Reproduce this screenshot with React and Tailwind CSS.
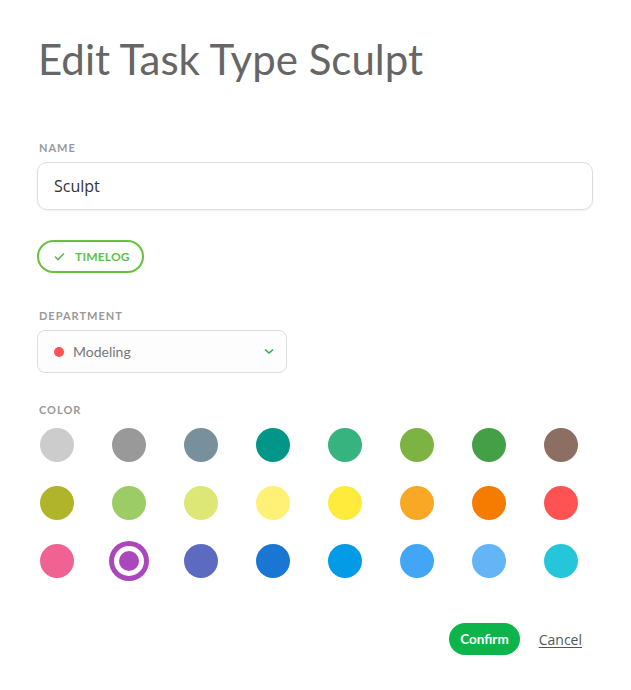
import React from "react";

const colors = [
  "#cccccc", "#999999", "#78909c", "#009688", "#36b37e", "#7cb342", "#43a047", "#8d6e63",
  "#afb42b", "#9ccc65", "#dce775", "#fff176", "#ffeb3b", "#f9a825", "#f57c00", "#ff5252",
  "#f06292", "#ab47bc", "#5c6bc0", "#1976d2", "#039be5", "#42a5f5", "#64b5f6", "#26c6da",
];

export default function App() {
  return (
    <div className="min-h-[690px] bg-white pl-[37px] pr-[38px] pt-[33px]" style={{ fontFamily: "Lato, 'Open Sans', sans-serif" }}>
      <h1 className="ml-[1px] text-[42px] leading-[52px] text-[#666666] font-normal">Edit Task Type Sculpt</h1>

      <div className="mt-[56px]">
        <label className="block pl-[2px] text-[11px] font-bold tracking-[1px] text-[#999999] leading-[14px]">NAME</label>
        <div className="mt-[7px] h-[48px] w-[556px] rounded-[10px] border border-[#dddddd] flex items-center pl-[16px] shadow-[0_1px_2px_rgba(0,0,0,0.06)]">
          <span className="text-[16px] text-[#333333]" style={{ fontFamily: "'Open Sans', sans-serif" }}>Sculpt</span>
        </div>
      </div>

      <div className="mt-[30px]">
        <button className="h-[33px] w-[107px] rounded-full border-2 border-[#67c23a] flex items-center pl-[15px] gap-[10px] text-[#5cb85c]">
          <svg width="11" height="9" viewBox="0 0 11 9" fill="none">
            <path d="M1 4.5 L4 7.5 L10 1.5" stroke="#5cb85c" strokeWidth="1.6" />
          </svg>
          <span className="text-[12px] font-bold text-[#5fbf4a] tracking-[0.2px]">TIMELOG</span>
        </button>
      </div>

      <div className="mt-[36px]">
        <label className="block pl-[2px] text-[11px] font-bold tracking-[1px] text-[#999999] leading-[14px]">DEPARTMENT</label>
        <div className="mt-[7px] h-[43px] w-[250px] rounded-[8px] border border-[#dddddd] bg-[#fdfdfd] flex items-center pl-[16px] pr-[12px]">
          <span className="w-[10px] h-[10px] rounded-full bg-[#ff5252]" />
          <span className="ml-[9px] text-[14px] text-[#777777] flex-1">Modeling</span>
          <svg width="10" height="7" viewBox="0 0 10 7" fill="none">
            <path d="M1 1.5 L5 5 L9 1.5" stroke="#22b14c" strokeWidth="1.6" />
          </svg>
        </div>
      </div>

      <div className="mt-[30px]">
        <label className="block pl-[2px] text-[11px] font-bold tracking-[1px] text-[#999999] leading-[14px]">COLOR</label>
        <div className="mt-[11px] pl-[3px] grid grid-cols-[repeat(8,34px)] gap-x-[38px] gap-y-[24px]">
          {colors.map((c) => (
            <div key={c} className="w-[34px] h-[34px] flex items-center justify-center">
              {c === "#ab47bc" ? (
                <div className="shrink-0 w-[40px] h-[40px] rounded-full p-[5px]" style={{ backgroundColor: c }}>
                  <div className="w-full h-full rounded-full bg-white p-[5px]">
                    <div className="w-full h-full rounded-full" style={{ backgroundColor: c }} />
                  </div>
                </div>
              ) : (
                <div className="w-[34px] h-[34px] rounded-full" style={{ backgroundColor: c }} />
              )}
            </div>
          ))}
        </div>
      </div>

      <div className="mt-[45px] flex items-center justify-end pr-[11px] gap-[19px]">
        <button className="h-[32px] px-[11px] rounded-full bg-[#0bb54a] text-white text-[13.5px] font-bold">Confirm</button>
        <span className="text-[14px] text-[#555555] underline underline-offset-2" style={{ fontFamily: "'Open Sans', sans-serif" }}>Cancel</span>
      </div>
    </div>
  );
}
